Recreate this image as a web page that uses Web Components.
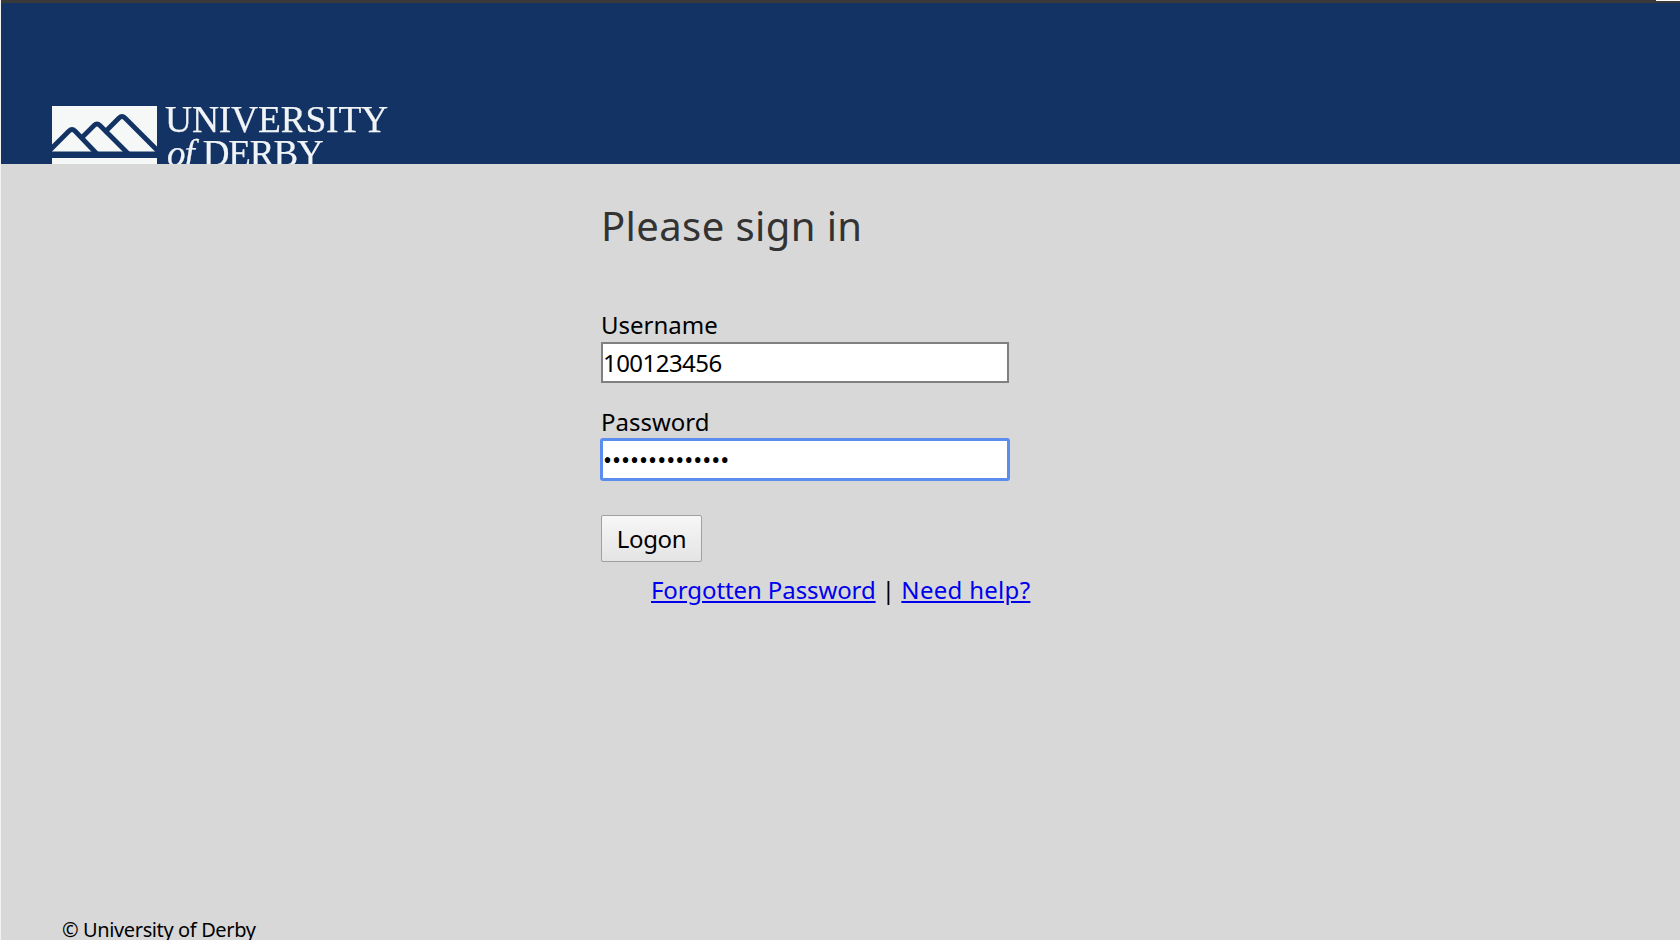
<!doctype html>
<html><head><meta charset="utf-8"><title>Please sign in</title>
<style>html,body{margin:0;padding:0;height:940px;overflow:hidden;background:#d8d8d8}</style></head>
<body>
<uod-app></uod-app>
<template id="t-app"><style>
:host{display:flex;flex-direction:column;height:940px;overflow:hidden;border-left:1px solid #f2f2f2;box-sizing:border-box;font-family:"Noto Sans","Open Sans",sans-serif;color:#000;background:#d8d8d8;position:relative}
.strip{height:3px;background:#3a3a3a;margin-left:-1px;flex:none;position:relative}
.strip::after{content:"";position:absolute;right:0;top:0;width:24px;height:1px;background:#fff}
main{flex:1;padding:0 0 0 600px;min-height:0}
</style>
<div class="strip"></div>
<uod-header></uod-header>
<main><uod-login></uod-login></main>
<uod-footer></uod-footer>
</template>
<template id="t-header"><style>
:host{display:block;height:161px;flex:none;background:#133365;overflow:hidden;box-sizing:border-box;padding:103px 0 0 51px}
.logo{display:flex;gap:8px;filter:blur(.45px)}
svg{flex:none;display:block}
.name{font-family:"Liberation Serif",serif;color:#f1f4f6;font-size:37.5px;line-height:34px;letter-spacing:-.2px;margin-top:-3px;white-space:nowrap;-webkit-text-stroke:.25px #f1f4f6}
.d{font-size:37px;letter-spacing:-1.1px;display:block;padding-left:2px}
.d i{margin-right:1px}
</style>
<div class="logo">
<svg width="105" height="70" viewBox="0 0 105 70"><rect width="105" height="46" fill="#f6f8f8"/><rect y="52" width="105" height="18" fill="#f6f8f8"/>
<path d="M-2 44 L17 25 Q20 22 23 25 L45 48 M28 33.500 L42 19.500 Q45 16.500 48 19.500 L77 48.500 M52 27 L67 12 Q70 9 73 12 L108 47" fill="none" stroke="#133365" stroke-width="4.8" stroke-linejoin="round"/><path d="M0 46H105" stroke="#133365" stroke-width="1"/></svg>
<div class="name">UNIVERSITY<span class="d"><i>of</i> DERBY</span></div>
</div></template>
<template id="t-login"><style>
:host{display:block;width:420px}
h1{font-weight:400;font-size:40px;line-height:54px;margin:0;padding-top:35px;color:#333;letter-spacing:.4px}
label{display:block;font-size:24px;line-height:34px;letter-spacing:0}
.u{margin-top:55px}.p{margin-top:22px}
input{display:block;box-sizing:border-box;width:408px;height:41px;border:2px solid #808080;background:#fff;margin:0;padding:0;font:24px "Noto Sans","Open Sans",sans-serif;letter-spacing:-.55px;color:#000;outline:none;border-radius:0}
input.focus{border-color:#5b8def;border-radius:2px;box-shadow:0 0 0 1px #5b8def;letter-spacing:0}
button{display:block;margin-top:35px;width:101px;height:47px;box-sizing:border-box;border:1px solid #a0a0a0;border-radius:2px;background:linear-gradient(#f7f7f7,#e4e4e4);font:24px "Noto Sans","Open Sans",sans-serif;letter-spacing:-.3px;color:#000;padding:0}
.links{font-size:24px;line-height:33px;margin:11px 0 0 50px;white-space:nowrap}
a{color:#0000ee;text-decoration:underline;letter-spacing:-.1px}
a.h{letter-spacing:.3px}
</style>
<h1>Please sign in</h1>
<label class="u" for="u">Username</label><input id="u" value="100123456">
<label class="p" for="p">Password</label><input id="p" class="focus" type="password" value="aaaaaaaaaaaaaa">
<button>Logon</button>
<div class="links"><a href="#">Forgotten Password</a> | <a class="h" href="#">Need help?</a></div>
</template>
<template id="t-footer"><style>
:host{display:block;flex:none;height:24px;padding-left:61px;font-size:20px;line-height:27px;letter-spacing:-.38px;overflow:hidden}
</style>© University of Derby</template>
<script>
for (const [tag,id] of [['uod-app','t-app'],['uod-header','t-header'],['uod-login','t-login'],['uod-footer','t-footer']]) {
  customElements.define(tag, class extends HTMLElement{
    constructor(){super();this.attachShadow({mode:'open'}).appendChild(document.getElementById(id).content.cloneNode(true));}
  });
}
</script>
</body></html>
